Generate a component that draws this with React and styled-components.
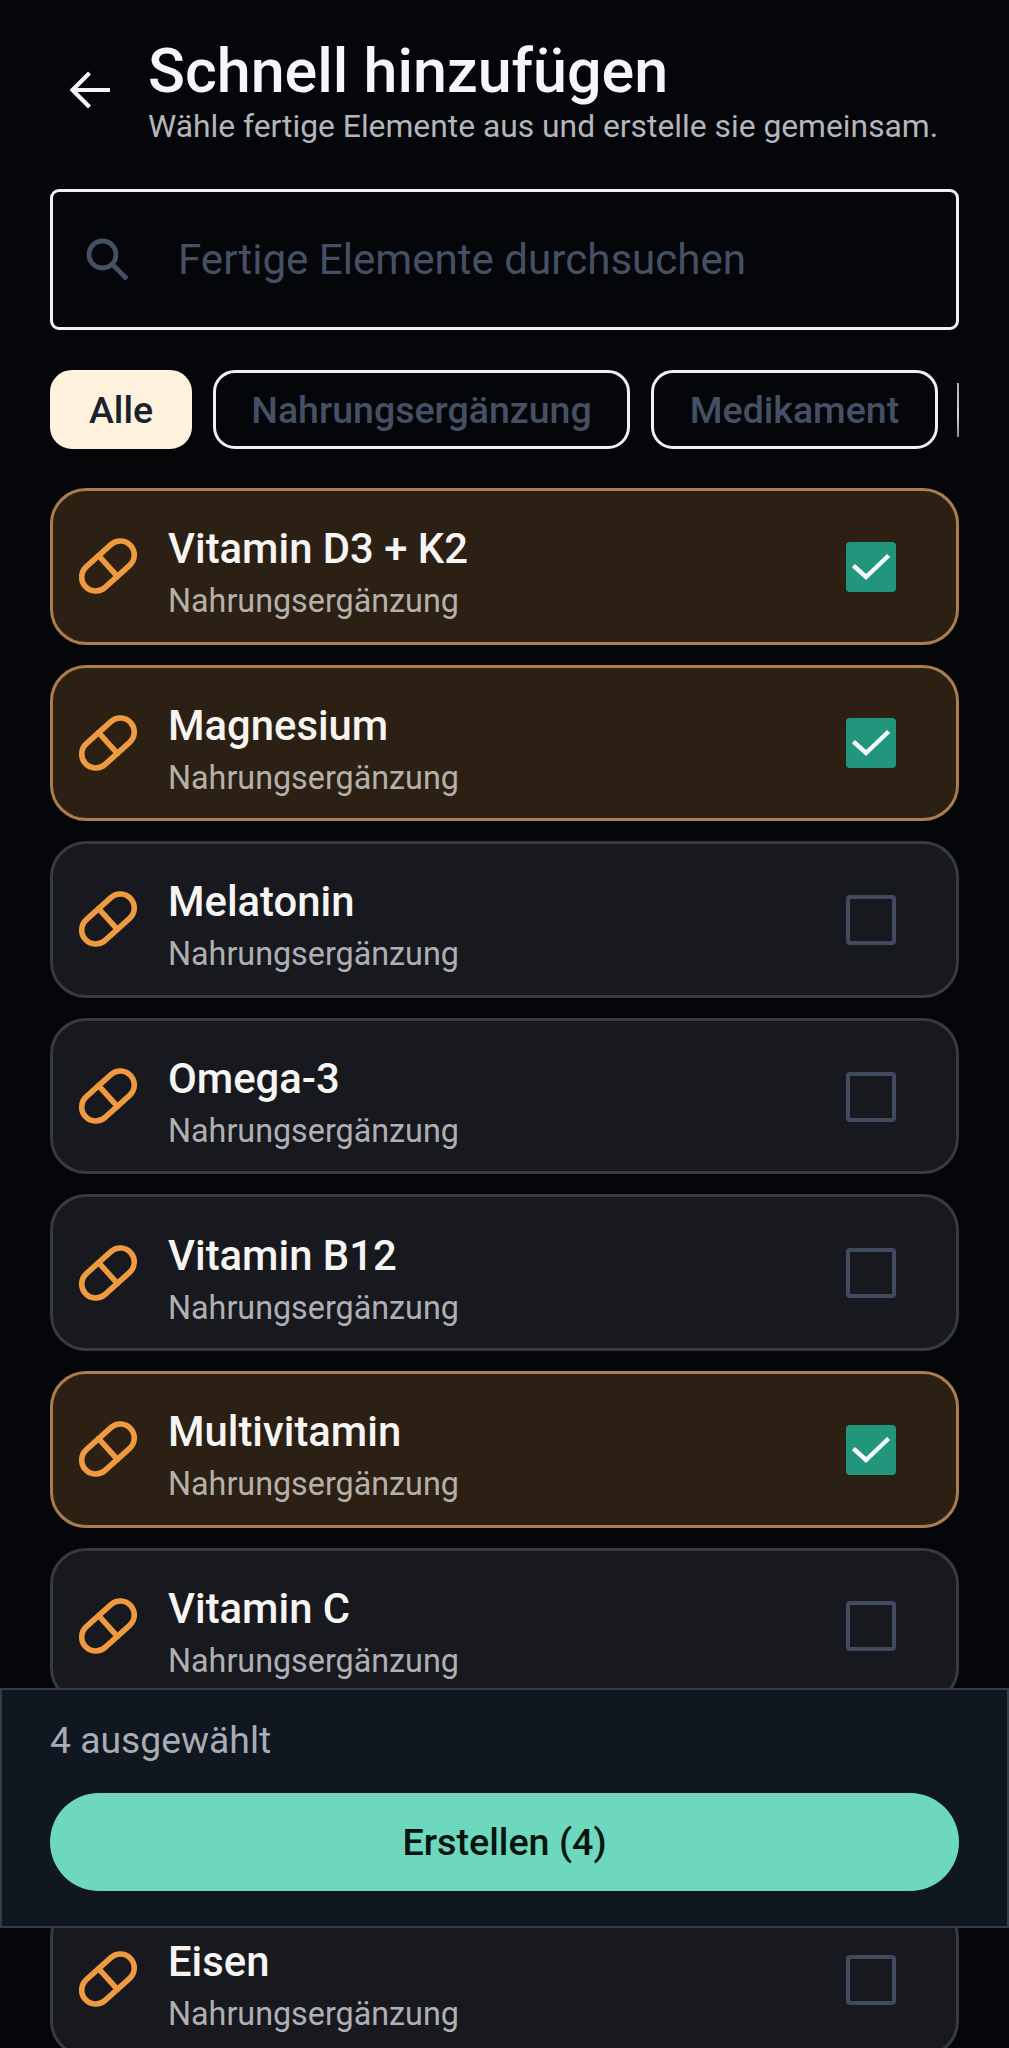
import React from "react";
import styled, { createGlobalStyle } from "styled-components";

const Global = createGlobalStyle`
  html, body { margin: 0; padding: 0; background: #05070b; }
  * { box-sizing: border-box; }
`;

const Page = styled.div`
  position: relative;
  width: 1009px;
  height: 2048px;
  overflow: hidden;
  background: #04060a;
  font-family: Roboto, "Noto Sans", sans-serif;
  padding: 38px 50px 0;
`;

const Header = styled.header`
  display: flex;
  align-items: flex-start;
  height: 151px;
`;

const BackButton = styled.div`
  width: 98px;
  flex: none;
  padding: 33px 0 0 20px;
  color: #f4f5f6;
  display: flex;
`;

const Titles = styled.div`
  display: flex;
  flex-direction: column;
`;

const Title = styled.h1`
  margin: 0;
  font-size: 61px;
  line-height: 66px;
  font-weight: 500;
  color: #f5f6f7;
  white-space: nowrap;
`;

const Subtitle = styled.p`
  margin: 4px 0 0;
  font-size: 31.8px;
  line-height: 36px;
  font-weight: 400;
  color: #b4b6ba;
  white-space: nowrap;
`;

const SearchBox = styled.div`
  height: 141px;
  border: 3px solid #eef0f2;
  border-radius: 9px;
  display: flex;
  align-items: center;
  padding-left: 33px;
  gap: 49px;
`;

const Placeholder = styled.span`
  font-size: 42.1px;
  color: #465064;
  white-space: nowrap;
`;

const Chips = styled.div`
  display: flex;
  gap: 21px;
  margin-top: 40px;
  height: 79px;
  overflow: hidden;
`;

const Chip = styled.div`
  flex: none;
  height: 79px;
  width: ${(p) => p.$width}px;
  border-radius: 22px;
  display: flex;
  align-items: center;
  justify-content: center;
  font-size: 37.5px;
  font-weight: 500;
  white-space: nowrap;
  color: ${(p) => (p.$active ? "#1a2130" : "#465064")};
  background: ${(p) => (p.$active ? "#fff2dc" : "transparent")};
  border: 3px solid ${(p) => (p.$active ? "#fff2dc" : "#eef0f2")};
`;

const Sliver = styled.div`
  flex: none;
  width: 2px;
  height: 54px;
  margin: 13px 0 0 -2px;
  background: linear-gradient(#a9abad, #d5d6d7 60%, #8b8c8e);
`;

const List = styled.div`
  display: flex;
  flex-direction: column;
  gap: 20px;
  margin-top: 39px;
`;

const Card = styled.div`
  height: 156.6px;
  border-radius: 36px;
  display: flex;
  align-items: center;
  padding: 0 60px 0 22px;
  background: ${(p) => (p.$on ? "#2c2014" : "#17191e")};
  border: 3px solid ${(p) => (p.$on ? "#ab7c4c" : "#373a41")};
`;

const PillWrap = styled.div`
  flex: none;
  width: 66px;
  height: 66px;
  margin-right: 27px;
  color: #f09a40;
  display: flex;
`;

const CardText = styled.div`
  flex: 1;
  min-width: 0;
  display: flex;
  flex-direction: column;
  padding-top: 13px;
`;

const CardTitle = styled.div`
  font-size: 41.8px;
  line-height: 48px;
  font-weight: 500;
  color: #f6f5f3;
`;

const CardSub = styled.div`
  margin-top: 9px;
  font-size: 32.3px;
  line-height: 38px;
  color: ${(p) => (p.$on ? "#b5b0aa" : "#aeb0b4")};
`;

const Box = styled.div`
  flex: none;
  width: 50px;
  height: 50px;
  margin-top: 1px;
  border-radius: 4px;
  display: flex;
  align-items: center;
  justify-content: center;
  background: ${(p) => (p.$on ? "#21967c" : "transparent")};
  border: ${(p) => (p.$on ? "none" : "4px solid #414a5e")};
`;

const Footer = styled.div`
  position: absolute;
  left: 0;
  top: 1688px;
  width: 1009px;
  height: 240px;
  background: #101720;
  border: 2px solid #363c46;
  padding: 0 48px;
`;

const Count = styled.div`
  margin-top: 25px;
  font-size: 37.3px;
  line-height: 50px;
  color: #a9acb2;
`;

const CreateButton = styled.div`
  margin-top: 28px;
  height: 98px;
  border-radius: 49px;
  background: #6dd8bd;
  color: #07140f;
  display: flex;
  align-items: center;
  justify-content: center;
  font-size: 37.7px;
  font-weight: 500;
`;

const Pill = () => (
  <svg width="66" height="66" viewBox="0 0 66 66" fill="none" stroke="currentColor" strokeWidth="5.6" strokeLinecap="round">
    <rect x="2.5" y="19" width="61" height="28" rx="14" transform="rotate(-42 33 33)" />
    <line x1="23.6" y1="22.6" x2="42.4" y2="43.4" />
  </svg>
);

const Check = () => (
  <svg width="50" height="50" viewBox="0 0 50 50" fill="none" stroke="#f6fbf9" strokeWidth="4.4" strokeLinecap="square">
    <path d="M9 25 L20 35 L41 15" />
  </svg>
);

const before = [
  ["Vitamin D3 + K2", true],
  ["Magnesium", true],
  ["Melatonin", false],
  ["Omega-3", false],
  ["Vitamin B12", false],
  ["Multivitamin", true],
  ["Vitamin C", false],
];

const Item = ({ name, on }) => (
  <Card $on={on}>
    <PillWrap><Pill /></PillWrap>
    <CardText>
      <CardTitle>{name}</CardTitle>
      <CardSub $on={on}>Nahrungsergänzung</CardSub>
    </CardText>
    <Box $on={on}>{on && <Check />}</Box>
  </Card>
);

export default function App() {
  return (
    <Page>
      <Global />
      <Header>
        <BackButton>
          <svg width="40" height="38" viewBox="0 0 40 38" fill="none" stroke="currentColor" strokeWidth="4.2">
            <path d="M40 19 H3 M19.5 2 L2.5 19 L19.5 36" />
          </svg>
        </BackButton>
        <Titles>
          <Title>Schnell hinzufügen</Title>
          <Subtitle>Wähle fertige Elemente aus und erstelle sie gemeinsam.</Subtitle>
        </Titles>
      </Header>
      <SearchBox>
        <svg width="43" height="43" viewBox="0 0 43 43" fill="none" stroke="#465064" strokeWidth="4.8">
          <circle cx="16.5" cy="16.5" r="13.5" />
          <path d="M26.5 26.5 L41 41" />
        </svg>
        <Placeholder>Fertige Elemente durchsuchen</Placeholder>
      </SearchBox>
      <Chips>
        <Chip $active $width={142}>Alle</Chip>
        <Chip $width={417}>Nahrungsergänzung</Chip>
        <Chip $width={287}>Medikament</Chip>
        <Sliver />
      </Chips>
      <List>
        {before.map(([name, on]) => (
          <Item key={name} name={name} on={on} />
        ))}
        <Card />
        <Item name="Eisen" on={false} />
      </List>
      <Footer>
        <Count>4 ausgewählt</Count>
        <CreateButton>Erstellen (4)</CreateButton>
      </Footer>
    </Page>
  );
}
